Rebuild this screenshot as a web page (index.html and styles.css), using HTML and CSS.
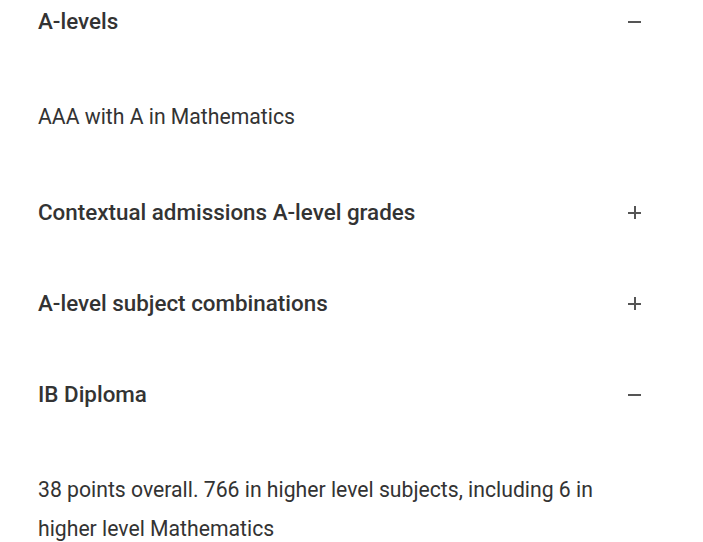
FILE: index.html
```html
<!DOCTYPE html>
<html>
<head>
<meta charset="utf-8">
<link rel="stylesheet" href="styles.css">
</head>
<body>
<div class="accordion">
  <div class="item open">
    <div class="header"><h3 class="title">A-levels</h3><span class="icon minus"></span></div>
    <div class="body"><p>AAA with A in Mathematics</p></div>
  </div>
  <div class="item">
    <div class="header"><h3 class="title">Contextual admissions A-level grades</h3><span class="icon plus"></span></div>
  </div>
  <div class="item">
    <div class="header"><h3 class="title">A-level subject combinations</h3><span class="icon plus"></span></div>
  </div>
  <div class="item open">
    <div class="header"><h3 class="title">IB Diploma</h3><span class="icon minus"></span></div>
    <div class="body"><p>38 points overall. 766 in higher level subjects, including 6 in higher level Mathematics</p></div>
  </div>
</div>
</body>
</html>
```
FILE: styles.css
```css
html, body {
  margin: 0;
  padding: 0;
  background: #fff;
}
body {
  font-family: Roboto, "Liberation Sans", sans-serif;
  color: #333;
  overflow: hidden;
}
.accordion {
  margin-top: -24px;
  padding-left: 38px;
  width: 604px;
}
.header {
  display: flex;
  align-items: center;
  justify-content: space-between;
  padding: 32px 0;
}
.title {
  margin: 0;
  font-size: 22.4px;
  line-height: 27px;
  font-weight: 500;
  color: #333;
}
.icon {
  position: relative;
  width: 13px;
  height: 13px;
  margin-right: 1px;
  flex-shrink: 0;
}
.icon::before,
.icon::after {
  content: "";
  position: absolute;
  background: #555;
}
.icon::before {
  left: 0;
  right: 0;
  top: 6px;
  height: 1.5px;
}
.plus::after {
  top: 0;
  bottom: 0;
  left: 6px;
  width: 1.5px;
}
.body {
  padding: 30px 0 31px;
}
.body p {
  margin: 0;
  font-size: 21.2px;
  line-height: 39px;
  color: #333;
  max-width: 575px;
}
```
